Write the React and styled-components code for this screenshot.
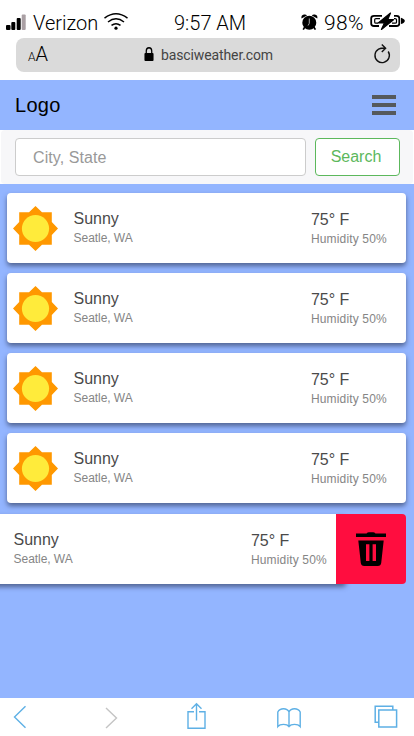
import React from "react";
import styled, { createGlobalStyle } from "styled-components";

const GlobalStyle = createGlobalStyle`
  * { box-sizing: border-box; }
  body { margin: 0; background: #fff; font-family: "Liberation Sans", Arial, sans-serif; }
`;

const Phone = styled.div`
  width: 414px;
  height: 736px;
  display: flex;
  flex-direction: column;
  overflow: hidden;
  background: #93b5ff;
`;

const BrowserTop = styled.header`
  height: 80px;
  flex: none;
  background: #fff;
  font-family: Roboto, sans-serif;
  font-weight: 300;
  color: #000;
`;

const StatusBar = styled.div`
  height: 38px;
  padding: 12px 9px 0 6px;
  display: grid;
  grid-template-columns: 168px 1fr auto;
  font-size: 20px;
  line-height: 22px;
  white-space: nowrap;
`;

const StatusGroup = styled.div`
  display: flex;
  align-items: flex-start;
  height: 22px;
`;

const StatusText = styled.span`
  width: ${(p) => p.$width}px;
  margin-left: ${(p) => p.$gap || 0}px;
  font-size: ${(p) => p.$size || 20}px;
  letter-spacing: ${(p) => p.$spacing || 0}px;
`;

const Icon = styled.svg`
  display: block;
  flex: none;
  overflow: visible;
  margin-top: ${(p) => p.$drop || 0}px;
`;

const AddressBar = styled.div`
  height: 34px;
  margin: 0 14px 0 16px;
  padding: 0 9px 0 12px;
  border-radius: 8px;
  background: #dadada;
  display: grid;
  grid-template-columns: 116px 1fr auto;
  align-items: center;
`;

const TextSize = styled.div`
  font-size: 20px;
  line-height: 32px;
  height: 34px;
  small { font-size: 12px; }
`;

const Address = styled.div`
  display: flex;
  align-items: center;
  gap: 7px;
  font-size: 14px;
  font-weight: 400;
  line-height: 34px;
  letter-spacing: -0.12px;
  color: #444;
`;

const NavBar = styled.nav`
  height: 50px;
  flex: none;
  padding: 0 18px 0 15px;
  display: flex;
  align-items: center;
  justify-content: space-between;
`;

const Brand = styled.div`
  font-size: 20px;
  line-height: 24px;
  letter-spacing: 0.3px;
  color: #000;
`;

const MenuButton = styled.div`
  width: 24px;
  height: 20px;
  display: flex;
  flex-direction: column;
  justify-content: space-between;
  span { height: 4px; background: #55595c; }
`;

const SearchArea = styled.div`
  flex: none;
  background: #fff;
`;

const SearchBar = styled.form`
  height: 54px;
  margin: 0 1px;
  padding: 8px 13px 8px 14px;
  display: flex;
  gap: 9px;
  border-radius: 4px;
  background: #f7f7f9;
`;

const SearchInput = styled.input`
  width: 291px;
  height: 38px;
  padding: 2px 17px 0;
  border: 1px solid #ccc;
  border-radius: 4px;
  background: #fff;
  font: 16px "Liberation Sans", Arial, sans-serif;
  letter-spacing: 0.08px;
  outline: none;
  &::placeholder { color: #999; opacity: 1; }
`;

const SearchButton = styled.button`
  width: 85px;
  height: 38px;
  padding: 0 3px 0 0;
  border: 1px solid #5cb85c;
  border-radius: 4px;
  background: #fff;
  color: #5cb85c;
  font: 16px "Liberation Sans", Arial, sans-serif;
`;

const List = styled.main`
  flex: 1;
  padding: 9px 8px 0 7px;
  display: flex;
  flex-direction: column;
  gap: 10px;
`;

const Card = styled.article`
  width: 399px;
  height: 70px;
  flex: none;
  padding: 0 6px;
  display: grid;
  grid-template-columns: 60.6px 237.4px 1fr;
  border-radius: 4px;
  background: #fff;
  box-shadow: 0 3px 5px rgba(40, 50, 80, 0.62);
`;

const SunBox = styled.div`
  padding-top: 13px;
`;

const Details = styled.div`
  padding-top: ${(p) => p.$top}px;
  white-space: nowrap;
`;

const Primary = styled.div`
  font-size: 16px;
  line-height: 20px;
  letter-spacing: -0.06px;
  color: #4a4a4a;
`;

const Secondary = styled.div`
  font-size: 12px;
  line-height: 18px;
  letter-spacing: ${(p) => p.$spacing || 0}px;
  color: #858585;
`;

const SwipedRow = styled.div`
  display: flex;
  margin: 1px 0 0 -60px;
`;

const DeleteButton = styled.div`
  width: 70px;
  height: 70px;
  flex: none;
  margin-left: -10px;
  z-index: 1;
  padding: 18px 0 0 20px;
  border-radius: 0 4px 4px 0;
  background: #ff0d3f;
`;

const BrowserBottom = styled.footer`
  height: 38px;
  flex: none;
  padding: 5px 0 0 13px;
  display: grid;
  grid-template-columns: 92px 82px 90px 97px 1fr;
  background: #fff;
`;

function WeatherCard() {
  return (
    <Card>
      <SunBox>
        <Icon width="45" height="45" viewBox="0 0 45 45">
          <path d="M22.5 0 29 6.2H38.8V16L45 22.5 38.8 29V38.8H29L22.5 45 16 38.8H6.2V29L0 22.5 6.2 16V6.2H16Z" fill="#ff9800" />
          <circle cx="22.5" cy="22.5" r="13.6" fill="#ffeb3b" />
        </Icon>
      </SunBox>
      <Details $top={16}>
        <Primary>Sunny</Primary>
        <Secondary $spacing={-0.06}>Seatle, WA</Secondary>
      </Details>
      <Details $top={17}>
        <Primary>75° F</Primary>
        <Secondary $spacing={0.15}>Humidity 50%</Secondary>
      </Details>
    </Card>
  );
}

function SignalIcon() {
  return (
    <Icon width="20" height="18" viewBox="0 0 20 18">
      <rect y="13" width="4.5" height="5" rx="1" />
      <rect x="5.3" y="10" width="4" height="8" rx="1" />
      <rect x="10.7" y="6" width="4" height="12" rx="1" />
      <rect x="15.7" y="2.5" width="4" height="15.5" rx="1" fill="#aaa0a4" />
    </Icon>
  );
}

function WifiIcon() {
  return (
    <Icon width="24" height="18" viewBox="0 0 24 18" fill="none" stroke="#000" strokeWidth="1.5" $drop={1}>
      <path d="M.5 5.2Q12-3.5 23.5 5.2M4 9Q12 2.6 20 9M7.5 12.4Q12 9 16.5 12.4" />
      <circle cx="12" cy="15.2" r="1.6" fill="#000" stroke="none" />
    </Icon>
  );
}

function AlarmIcon() {
  return (
    <Icon width="17" height="17" viewBox="0 0 17 17" $drop={2}>
      <circle cx="8.3" cy="8.8" r="7" />
      <path d="M.5 4.5Q-.2 1 3 .5 5 .2 6 1.4ZM16.3 4.5Q17 1 13.8.5 11.8.2 10.8 1.4Z" />
      <path d="m3.8 13-1.6 2.6M12.8 13l1.6 2.6" stroke="#000" strokeWidth="1.7" />
      <path d="M8.3 4.5v4.8l-1.2 2.2" fill="none" stroke="#aaa" strokeWidth="1" />
    </Icon>
  );
}

function BatteryIcon() {
  return (
    <Icon width="35" height="18" viewBox="0 0 35 18">
      <path d="M12 3.8H4Q1.2 3.8 1.2 6.3v5.2Q1.2 14 4 14h5M24 3.8h2.5Q29.3 3.8 29.3 6.3v5.2q0 2.5-2.8 2.5H19" fill="none" stroke="#000" strokeWidth="1.8" />
      <path d="M10 6.6H6q-1.3 0-1.3 1v2.6q0 1 1.3 1h2M24 6.6h1q1.5 0 1.5 1v2.6q0 1-1.5 1h-3" fill="none" stroke="#000" strokeWidth="1.2" />
      <path d="M20.5 1 8.2 11h6.2l-3 6.5L23.5 7.7h-5.8Z" stroke="#000" strokeWidth="1.2" strokeLinejoin="round" />
      <path d="M31 5.8q3.8 1.3 3.8 3.1T31 12Z" />
    </Icon>
  );
}

export default function App() {
  return (
    <>
      <GlobalStyle />
      <Phone>
        <BrowserTop>
          <StatusBar>
            <StatusGroup>
              <SignalIcon />
              <StatusText $width={71} $gap={7}>Verizon</StatusText>
              <WifiIcon />
            </StatusGroup>
            <StatusText $width={75}>9:57 AM</StatusText>
            <StatusGroup>
              <AlarmIcon />
              <StatusText $width={46} $gap={6} $size={21} $spacing={0.3}>98%</StatusText>
              <BatteryIcon />
            </StatusGroup>
          </StatusBar>
          <AddressBar>
            <TextSize><small>A</small>A</TextSize>
            <Address>
              <Icon width="10" height="14" viewBox="0 0 11 14" preserveAspectRatio="none" $drop={-3}>
                <rect x=".5" y="6" width="10" height="8" rx="1" />
                <path d="M2.5 7V4a3 3.2 0 0 1 6 0v3" fill="none" stroke="#000" strokeWidth="1.4" />
              </Icon>
              basciweather.com
            </Address>
            <Icon width="18" height="20" viewBox="0 0 18 20" fill="none" stroke="#111" strokeWidth="1.4">
              <path d="M12.2 3.9A7.2 7.2 0 1 0 15.2 6.5M7.5 3.2h4.8M8.8-.5l3.8 3.7-3.8 3.7" />
            </Icon>
          </AddressBar>
        </BrowserTop>
        <NavBar>
          <Brand>Logo</Brand>
          <MenuButton><span /><span /><span /></MenuButton>
        </NavBar>
        <SearchArea>
          <SearchBar>
            <SearchInput placeholder="City, State" />
            <SearchButton type="button">Search</SearchButton>
          </SearchBar>
        </SearchArea>
        <List>
          <WeatherCard />
          <WeatherCard />
          <WeatherCard />
          <WeatherCard />
          <SwipedRow>
            <WeatherCard />
            <DeleteButton>
              <Icon width="30" height="34" viewBox="0 0 30 34">
                <path d="M0 1.6h10.5Q11.5.3 13 .3h4q1.5 0 2.5 1.3H30V5H0ZM2.3 8.5h25.4L25.2 31q-.4 3-3.4 3H8.2q-3 0-3.4-3Z" />
                <path d="M10 12.3h3.4v16.6H10ZM16.6 12.3H20v16.6h-3.4Z" fill="#ff0d3f" />
              </Icon>
            </DeleteButton>
          </SwipedRow>
        </List>
        <BrowserBottom>
          <Icon width="13" height="28" viewBox="0 0 13 28" fill="none" stroke="#5eb0e5" strokeWidth="1.4">
            <path d="M12.5 3.2 1.5 14l11 10.8" />
          </Icon>
          <Icon width="13" height="28" viewBox="0 0 13 28" fill="none" stroke="#c4c4c4" strokeWidth="1.4">
            <path d="m1 5 10.5 10L1 25" />
          </Icon>
          <Icon width="19" height="28" viewBox="0 0 19 28" fill="none" stroke="#5eb0e5" strokeWidth="1.4">
            <path d="M7 8.8H1v16.5h17V8.8h-6M9.5 17.5V1M4.5 5.8l5-5 5 5" />
          </Icon>
          <Icon width="24" height="28" viewBox="0 0 24 28" fill="none" stroke="#5eb0e5" strokeWidth="1.4">
            <path d="M12 9Q10.5 5.8 6.5 5.8T.8 9v14.5q1.8-2.1 5.7-2.1T12 23.5q1.6-2.1 5.5-2.1t5.7 2.1V9q-1.7-3.2-5.7-3.2T12 9Zm0 0v14.5" />
          </Icon>
          <Icon width="24" height="28" viewBox="0 0 24 28" fill="none" stroke="#5eb0e5" strokeWidth="1.5">
            <path d="M4.8 19.2H1.2V3.2h17.6v3.6M4.8 7h17.8v17H4.8Z" />
          </Icon>
        </BrowserBottom>
      </Phone>
    </>
  );
}
